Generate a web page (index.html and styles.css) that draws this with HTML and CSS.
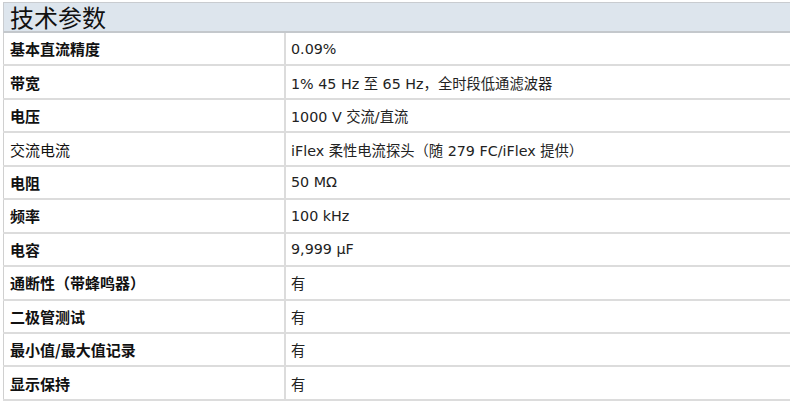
FILE: index.html
```html
<!DOCTYPE html>
<html lang="zh">
<head>
<meta charset="utf-8">
<link rel="stylesheet" href="styles.css">
</head>
<body>
<div class="spec">
  <div class="spec-title">技术参数</div>
  <table class="spec-table">
    <tr><th>基本直流精度</th><td>0.09%</td></tr>
    <tr><th>带宽</th><td>1% 45 Hz 至 65 Hz，全时段低通滤波器</td></tr>
    <tr><th>电压</th><td>1000 V 交流/直流</td></tr>
    <tr><th class="light">交流电流</th><td>iFlex 柔性电流探头（随 279 FC/iFlex 提供）</td></tr>
    <tr><th>电阻</th><td>50 MΩ</td></tr>
    <tr><th>频率</th><td>100 kHz</td></tr>
    <tr><th>电容</th><td>9,999 μF</td></tr>
    <tr><th>通断性（带蜂鸣器）</th><td>有</td></tr>
    <tr><th>二极管测试</th><td>有</td></tr>
    <tr><th>最小值/最大值记录</th><td>有</td></tr>
    <tr><th>显示保持</th><td>有</td></tr>
  </table>
</div>
</body>
</html>
```

FILE: styles.css
```css
html, body {
  margin: 0;
  padding: 0;
  background: #ffffff;
}
body {
  font-family: "DejaVu Sans", "Noto Sans CJK SC", sans-serif;
  color: #1a1a1a;
}
.spec {
  padding: 2px 0 0 3px;
}
.spec-title {
  height: 28px;
  border-top: 1px solid #c9ccd0;
  border-left: 1px solid #c9ccd0;
  border-bottom: 2px solid #c4c8cc;
  background: #dde5ed;
  font-family: "Noto Sans CJK SC", sans-serif;
  font-size: 24px;
  line-height: 27px;
  padding-left: 6px;
  color: #111;
}
.spec-table {
  width: 100%;
  border-collapse: collapse;
  table-layout: fixed;
}
.spec-table th,
.spec-table td {
  height: 31.45px;
  padding: 0;
  border-bottom: 2px solid #dcdcdc;
  vertical-align: middle;
  text-align: left;
  white-space: nowrap;
}
.spec-table th {
  width: 274px;
  border-left: 1px solid #d0d0d0;
  border-right: 2px solid #dcdcdc;
  padding-left: 6px;
  font-family: "Noto Sans CJK SC", sans-serif;
  font-size: 15px;
  font-weight: 700;
  color: #111;
}
.spec-table th.light {
  font-weight: 400;
}
.spec-table td {
  padding-left: 5px;
  font-size: 14.3px;
  color: #222;
}
```
